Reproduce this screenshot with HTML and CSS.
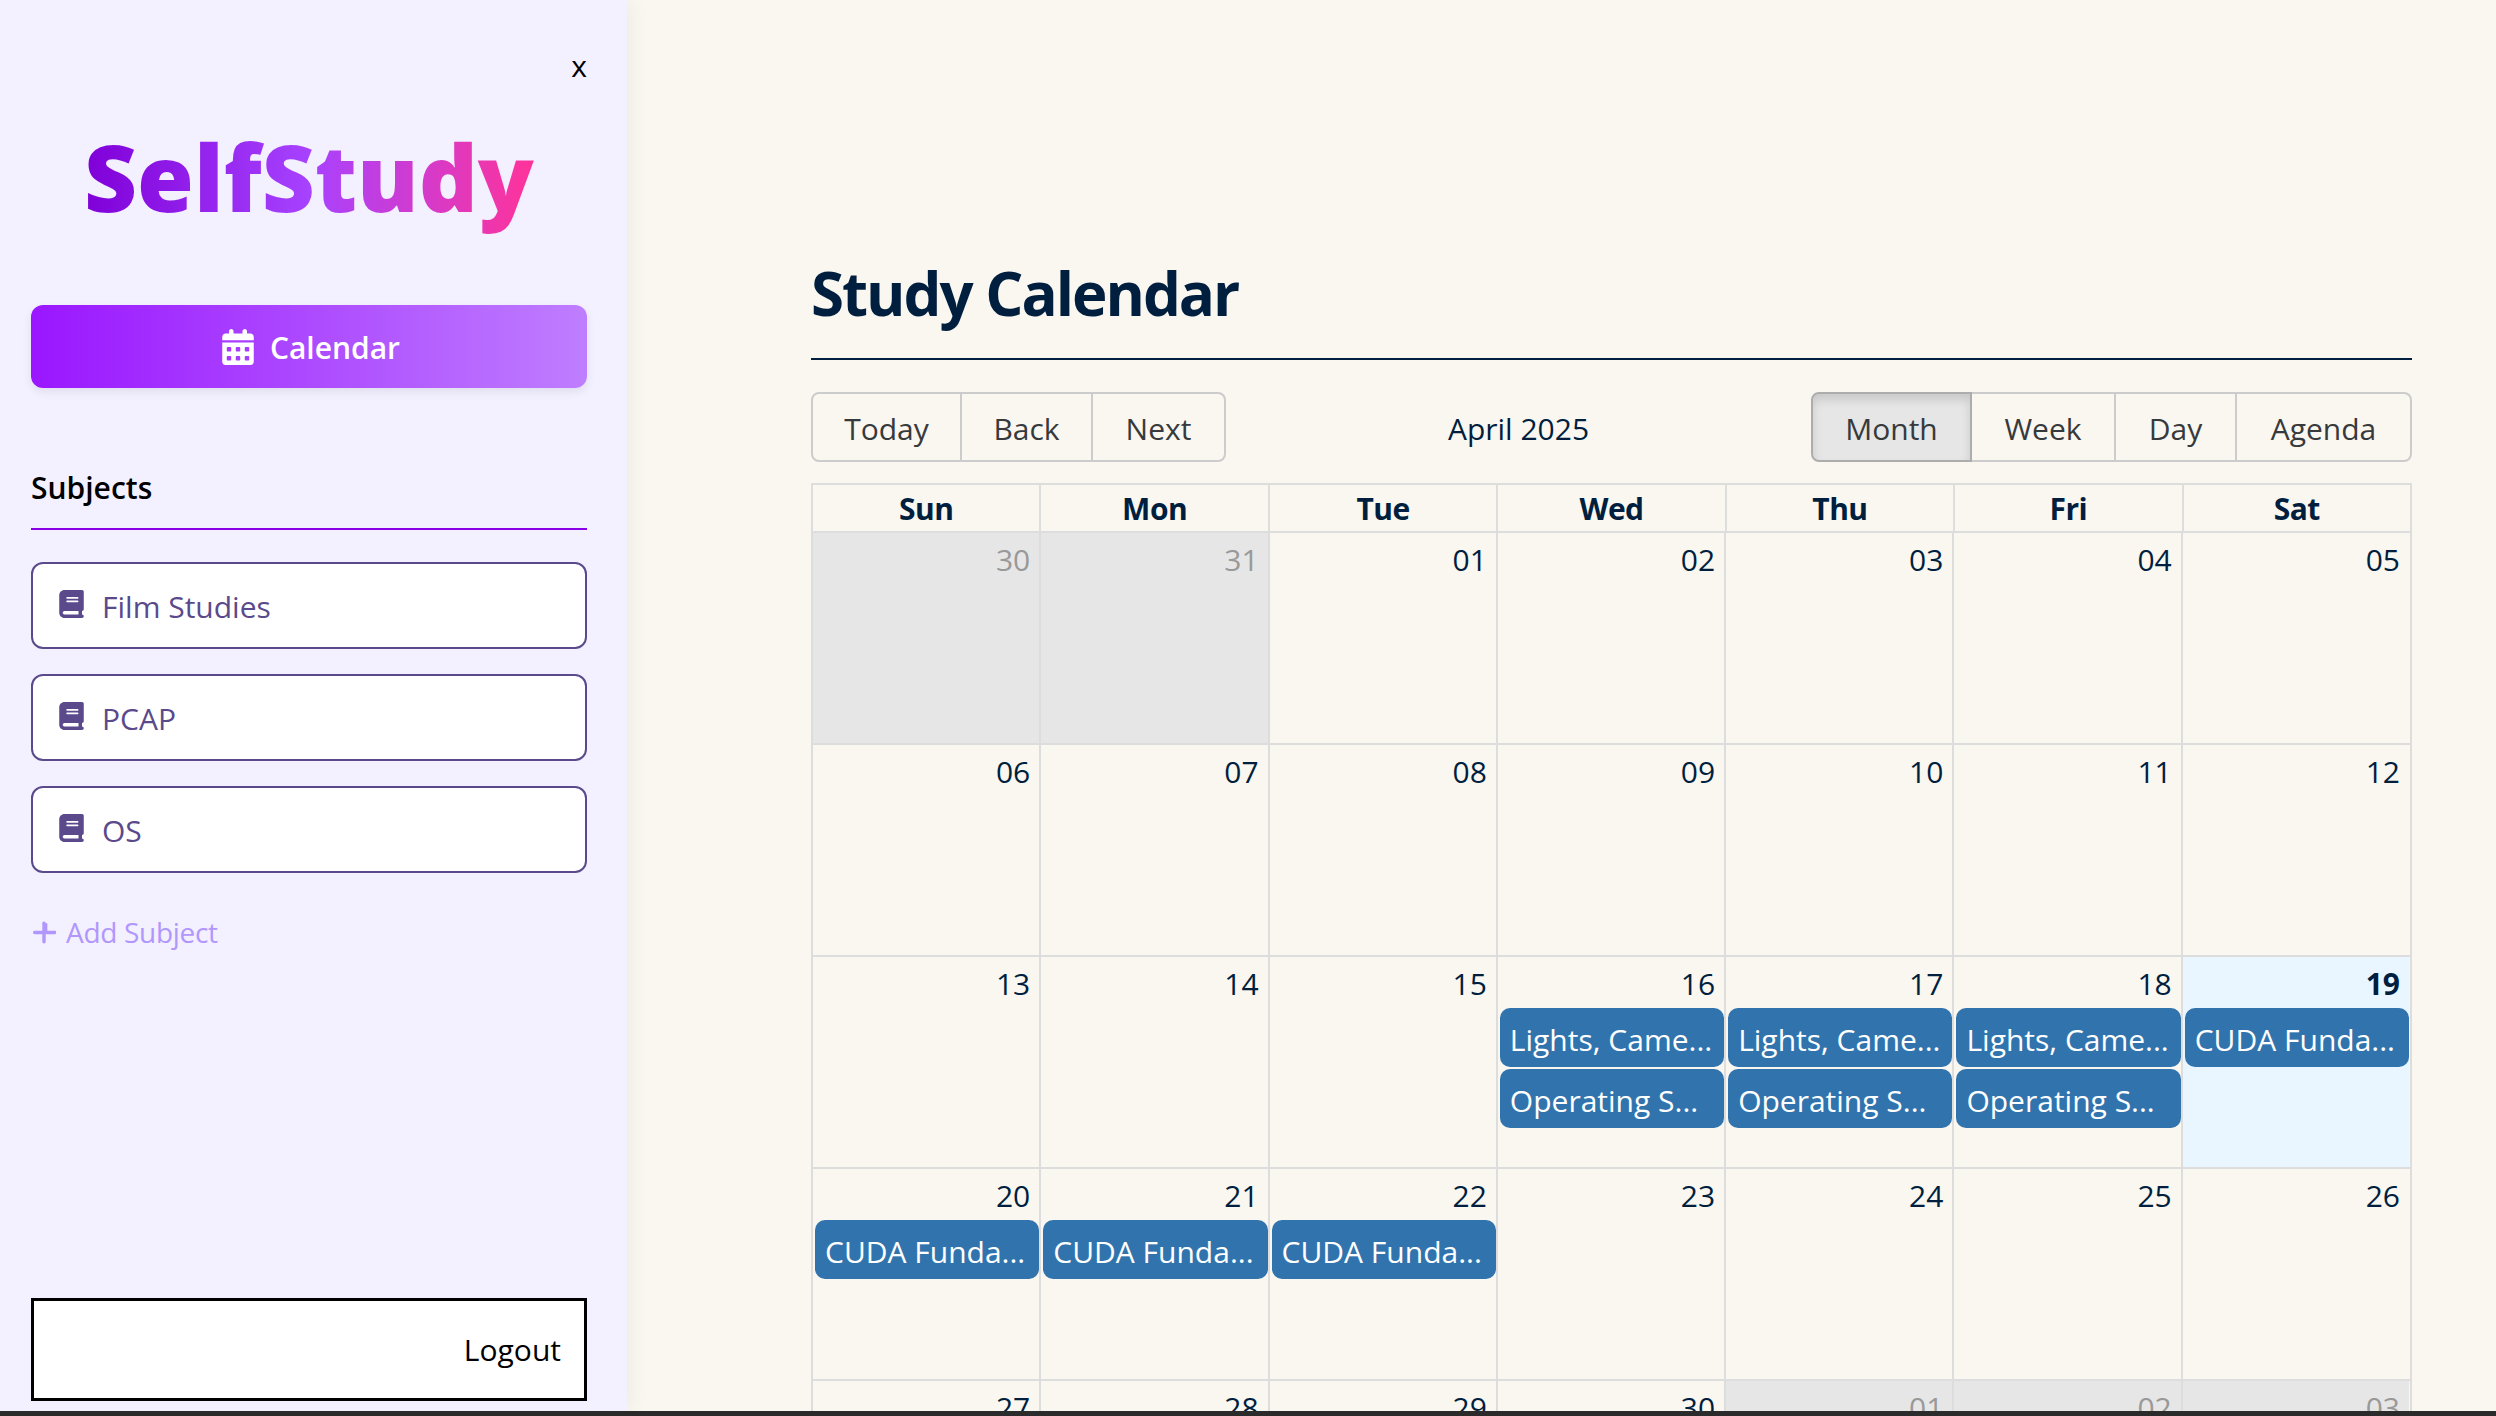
FILE: index.html
```html
<!DOCTYPE html>
<html lang="en">
<head>
<meta charset="utf-8">
<title>SelfStudy</title>
<link rel="stylesheet" href="styles.css">
</head>
<body>
<div class="app">
  <aside class="sidebar">
    <button class="close" type="button">x</button>
    <div class="logo-wrap"><span class="logo">SelfStudy</span></div>
    <a class="nav-primary" href="#">
      <svg class="nav-icon" viewBox="0 0 448 512"><path d="M128 0c17.7 0 32 14.3 32 32V64H288V32c0-17.7 14.3-32 32-32s32 14.3 32 32V64h48c26.5 0 48 21.5 48 48v48H0V112C0 85.5 21.5 64 48 64H96V32c0-17.7 14.3-32 32-32zM0 192H448V464c0 26.5-21.5 48-48 48H48c-26.5 0-48-21.5-48-48V192zm64 80v32c0 8.8 7.2 16 16 16h32c8.8 0 16-7.2 16-16V272c0-8.8-7.2-16-16-16H80c-8.8 0-16 7.2-16 16zm128 0v32c0 8.8 7.2 16 16 16h32c8.8 0 16-7.2 16-16V272c0-8.8-7.2-16-16-16H208c-8.8 0-16 7.2-16 16zm144-16c-8.8 0-16 7.2-16 16v32c0 8.8 7.2 16 16 16h32c8.8 0 16-7.2 16-16V272c0-8.8-7.2-16-16-16H336zM64 400v32c0 8.8 7.2 16 16 16h32c8.8 0 16-7.2 16-16V400c0-8.8-7.2-16-16-16H80c-8.8 0-16 7.2-16 16zm144-16c-8.8 0-16 7.2-16 16v32c0 8.8 7.2 16 16 16h32c8.8 0 16-7.2 16-16V400c0-8.8-7.2-16-16-16H208zm112 16v32c0 8.8 7.2 16 16 16h32c8.8 0 16-7.2 16-16V400c0-8.8-7.2-16-16-16H336c-8.8 0-16 7.2-16 16z"/></svg>
      <span>Calendar</span>
    </a>
    <h2 class="subjects-title">Subjects</h2>
    <ul class="subjects">
      <li class="subject">
        <svg class="book" viewBox="0 0 448 512"><path d="M96 0C43 0 0 43 0 96V416c0 53 43 96 96 96H384h32c17.7 0 32-14.3 32-32s-14.3-32-32-32V384c17.7 0 32-14.3 32-32V32c0-17.7-14.3-32-32-32H384 96zm0 384H352v64H96c-17.7 0-32-14.3-32-32s14.3-32 32-32zm32-240c0-8.8 7.2-16 16-16H336c8.8 0 16 7.2 16 16s-7.2 16-16 16H144c-8.8 0-16-7.2-16-16zm16 48H336c8.8 0 16 7.2 16 16s-7.2 16-16 16H144c-8.8 0-16-7.2-16-16s7.2-16 16-16z"/></svg>
        <span>Film Studies</span>
      </li>
      <li class="subject">
        <svg class="book" viewBox="0 0 448 512"><path d="M96 0C43 0 0 43 0 96V416c0 53 43 96 96 96H384h32c17.7 0 32-14.3 32-32s-14.3-32-32-32V384c17.7 0 32-14.3 32-32V32c0-17.7-14.3-32-32-32H384 96zm0 384H352v64H96c-17.7 0-32-14.3-32-32s14.3-32 32-32zm32-240c0-8.8 7.2-16 16-16H336c8.8 0 16 7.2 16 16s-7.2 16-16 16H144c-8.8 0-16-7.2-16-16zm16 48H336c8.8 0 16 7.2 16 16s-7.2 16-16 16H144c-8.8 0-16-7.2-16-16s7.2-16 16-16z"/></svg>
        <span>PCAP</span>
      </li>
      <li class="subject">
        <svg class="book" viewBox="0 0 448 512"><path d="M96 0C43 0 0 43 0 96V416c0 53 43 96 96 96H384h32c17.7 0 32-14.3 32-32s-14.3-32-32-32V384c17.7 0 32-14.3 32-32V32c0-17.7-14.3-32-32-32H384 96zm0 384H352v64H96c-17.7 0-32-14.3-32-32s14.3-32 32-32zm32-240c0-8.8 7.2-16 16-16H336c8.8 0 16 7.2 16 16s-7.2 16-16 16H144c-8.8 0-16-7.2-16-16zm16 48H336c8.8 0 16 7.2 16 16s-7.2 16-16 16H144c-8.8 0-16-7.2-16-16s7.2-16 16-16z"/></svg>
        <span>OS</span>
      </li>
    </ul>
    <a class="add-subject" href="#">
      <svg class="plus" viewBox="0 0 448 512"><path d="M256 80c0-17.7-14.3-32-32-32s-32 14.3-32 32V224H48c-17.7 0-32 14.3-32 32s14.3 32 32 32H192V432c0 17.7 14.3 32 32 32s32-14.3 32-32V288H432c17.7 0 32-14.3 32-32s-14.3-32-32-32H288V80z"/></svg>
      <span>Add Subject</span>
    </a>
    <button class="logout" type="button">Logout</button>
  </aside>

  <main class="main">
    <h1 class="page-title">Study Calendar</h1>
    <div class="toolbar">
      <div class="btn-group">
        <button class="tool-btn t-today" type="button">Today</button>
        <button class="tool-btn t-back" type="button">Back</button>
        <button class="tool-btn t-next" type="button">Next</button>
      </div>
      <span class="toolbar-label">April 2025</span>
      <div class="btn-group">
        <button class="tool-btn tool-active t-month" type="button">Month</button>
        <button class="tool-btn t-week" type="button">Week</button>
        <button class="tool-btn t-day" type="button">Day</button>
        <button class="tool-btn t-agenda" type="button">Agenda</button>
      </div>
    </div>

    <div class="calendar">
      <div class="head-row">
        <div class="head-cell">Sun</div><div class="head-cell">Mon</div><div class="head-cell">Tue</div><div class="head-cell">Wed</div><div class="head-cell">Thu</div><div class="head-cell">Fri</div><div class="head-cell">Sat</div>
      </div>
      <div class="week">
        <div class="day off"><div class="date">30</div></div>
        <div class="day off"><div class="date">31</div></div>
        <div class="day"><div class="date">01</div></div>
        <div class="day"><div class="date">02</div></div>
        <div class="day"><div class="date">03</div></div>
        <div class="day"><div class="date">04</div></div>
        <div class="day"><div class="date">05</div></div>
      </div>
      <div class="week">
        <div class="day"><div class="date">06</div></div>
        <div class="day"><div class="date">07</div></div>
        <div class="day"><div class="date">08</div></div>
        <div class="day"><div class="date">09</div></div>
        <div class="day"><div class="date">10</div></div>
        <div class="day"><div class="date">11</div></div>
        <div class="day"><div class="date">12</div></div>
      </div>
      <div class="week">
        <div class="day"><div class="date">13</div></div>
        <div class="day"><div class="date">14</div></div>
        <div class="day"><div class="date">15</div></div>
        <div class="day"><div class="date">16</div><div class="event">Lights, Came...</div><div class="event">Operating S...</div></div>
        <div class="day"><div class="date">17</div><div class="event">Lights, Came...</div><div class="event">Operating S...</div></div>
        <div class="day"><div class="date">18</div><div class="event">Lights, Came...</div><div class="event">Operating S...</div></div>
        <div class="day today"><div class="date">19</div><div class="event">CUDA Funda...</div></div>
      </div>
      <div class="week">
        <div class="day"><div class="date">20</div><div class="event">CUDA Funda...</div></div>
        <div class="day"><div class="date">21</div><div class="event">CUDA Funda...</div></div>
        <div class="day"><div class="date">22</div><div class="event">CUDA Funda...</div></div>
        <div class="day"><div class="date">23</div></div>
        <div class="day"><div class="date">24</div></div>
        <div class="day"><div class="date">25</div></div>
        <div class="day"><div class="date">26</div></div>
      </div>
      <div class="week">
        <div class="day"><div class="date">27</div></div>
        <div class="day"><div class="date">28</div></div>
        <div class="day"><div class="date">29</div></div>
        <div class="day"><div class="date">30</div></div>
        <div class="day off"><div class="date">01</div></div>
        <div class="day off"><div class="date">02</div></div>
        <div class="day off"><div class="date">03</div></div>
      </div>
    </div>
  </main>
</div>
<div class="bottom-bar"></div>
</body>
</html>
```
FILE: styles.css
```css
* { box-sizing: border-box; }
html, body { margin: 0; padding: 0; height: 100%; overflow: hidden; }
body {
  display: flex;
  flex-direction: column;
  background: #faf6f0;
  color: #001f3f;
  font-family: "Open Sans", "Noto Sans", "Liberation Sans", sans-serif;
  font-size: 30px;
}
button { font: inherit; }

.app { flex: 1; display: flex; min-height: 0; }
.bottom-bar { height: 5px; background: #2b2b2b; flex: none; }

/* Sidebar */
.sidebar {
  width: 627px;
  flex: none;
  display: flex;
  flex-direction: column;
  padding: 47px 40px 10px 31px;
  background: #f3f0ff;
  box-shadow: 4px 0 20px rgba(0, 0, 0, 0.05);
  position: relative;
  z-index: 1;
}
.close {
  align-self: flex-end;
  height: 38px;
  padding: 0;
  border: 0;
  background: none;
  color: #000;
  line-height: 38px;
}
.logo-wrap { margin-top: 27px; height: 130px; line-height: 130px; text-align: center; }
.logo {
  display: inline-block;
  font-family: "Noto Sans", "Open Sans", sans-serif;
  font-size: 92px;
  font-weight: 900;
  background: linear-gradient(90deg, #7f00d8 0%, #a742ff 50%, #ff3399 100%);
  -webkit-background-clip: text;
  background-clip: text;
  color: transparent;
}
.nav-primary {
  margin-top: 63px;
  height: 83px;
  flex: none;
  display: flex;
  align-items: center;
  justify-content: center;
  gap: 16px;
  padding-top: 1px;
  padding-left: 4px;
  border-radius: 12px;
  background: linear-gradient(90deg, #9a16ff 0%, #bf7eff 100%);
  box-shadow: 0 4px 10px rgba(0, 0, 0, 0.08);
  color: #fff;
  font-weight: 600;
  text-decoration: none;
}
.nav-icon { width: 32px; height: 36px; fill: #fff; }
.subjects-title {
  margin: 80px 0 0;
  padding-bottom: 20px;
  border-bottom: 2px solid #8a00e6;
  color: #000;
  font-size: 30px;
  font-weight: 600;
  line-height: 40px;
}
.subjects {
  list-style: none;
  margin: 32px 0 0;
  padding: 0;
  display: flex;
  flex-direction: column;
  gap: 25px;
}
.subject {
  height: 87px;
  display: flex;
  align-items: center;
  gap: 18px;
  padding: 2px 0 0 26px;
  border: 2px solid #5a4a8c;
  border-radius: 12px;
  background: #fff;
  color: #5a4a8c;
}
.book { width: 25px; height: 28px; fill: #5a4a8c; margin-top: -6px; }
.add-subject {
  margin-top: 39px;
  height: 40px;
  display: flex;
  align-items: center;
  gap: 10px;
  padding-left: 1px;
  color: #b197fc;
  font-size: 28px;
  letter-spacing: -0.3px;
  text-decoration: none;
}
.plus { width: 24px; height: 27px; fill: #b197fc; }
.logout {
  margin-top: auto;
  height: 103px;
  flex: none;
  padding: 0 23px 0 0;
  border: 3px solid #000;
  background: #fff;
  color: #000;
  text-align: right;
}

/* Main */
.main { flex: 1; min-width: 0; padding: 253px 84px 0 184px; overflow: hidden; }
.page-title {
  margin: 0;
  padding-bottom: 25px;
  border-bottom: 2px solid #001f3f;
  color: #001f3f;
  font-size: 60px;
  font-weight: 700;
  line-height: 80px;
  letter-spacing: -2px;
}
.toolbar {
  margin-top: 32px;
  display: flex;
  align-items: center;
  height: 70px;
}
.toolbar-label { flex: 1; padding-top: 3px; text-align: center; color: #001f3f; }
.btn-group { display: flex; height: 70px; }
.tool-btn {
  padding: 3px 0 0;
  border: 2px solid #ccc;
  border-left-width: 0;
  background: transparent;
  color: #373a3c;
}
.tool-btn:first-child { border-left-width: 2px; border-radius: 8px 0 0 8px; }
.tool-btn:last-child { border-radius: 0 8px 8px 0; }
.tool-active {
  background: #e6e6e6;
  border-color: #adadad;
  box-shadow: inset 0 6px 10px rgba(0, 0, 0, 0.125);
}
.t-today { width: 151px; }
.t-back { width: 131px; }
.t-next { width: 133px; }
.t-month { width: 161px; }
.t-week { width: 144px; }
.t-day { width: 121px; }
.t-agenda { width: 175px; }

/* Calendar grid */
.calendar { margin-top: 21px; border-right: 2px solid #ddd; border-top: 2px solid #ddd; width: 1601px; }
.head-row { display: grid; grid-template-columns: repeat(7, 1fr); height: 46px; }
.head-cell {
  border-left: 2px solid #ddd;
  text-align: center;
  font-weight: 700;
  line-height: 48px;
  letter-spacing: -0.5px;
  color: #001f3f;
}
.week {
  display: grid;
  grid-template-columns: repeat(7, 1fr);
  height: 212px;
  padding-right: 1px;
  border-top: 2px solid #ddd;
}
.day {
  min-width: 0;
  padding-left: 2px;
  border-left: 2px solid #ddd;
  display: flex;
  flex-direction: column;
  gap: 2px;
}
.date {
  height: 49px;
  padding-right: 9px;
  text-align: right;
  line-height: 54px;
  color: #001f3f;
}
.off { background: #e6e6e6; }
.off .date { color: #999; }
.today { background: #eaf6ff; }
.today .date { font-weight: 700; }
.event {
  height: 59px;
  padding: 0 10px;
  border-radius: 10px;
  background: #3174ad;
  color: #fff;
  line-height: 63px;
  white-space: nowrap;
  overflow: hidden;
}
```
